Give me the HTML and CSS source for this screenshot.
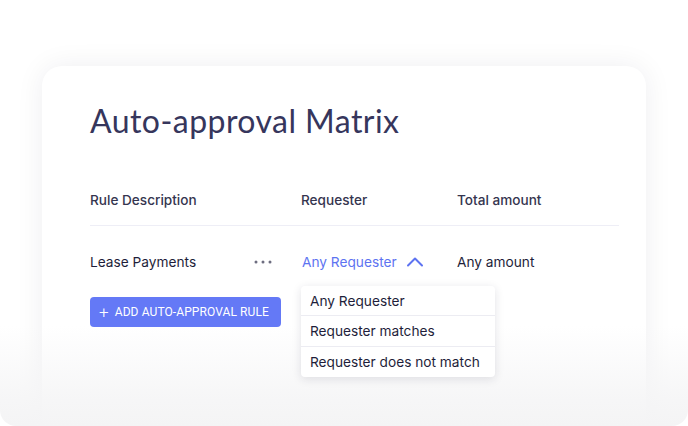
FILE: index.html
```html
<!DOCTYPE html>
<html lang="en">
<head>
<meta charset="utf-8">
<link rel="stylesheet" href="styles.css">
</head>
<body>
<div class="frame">
  <section class="card">
    <h1 class="title">Auto-approval Matrix</h1>
    <div class="row head">
      <div class="c1">Rule Description</div>
      <div class="c2">Requester</div>
      <div class="c3">Total amount</div>
    </div>
    <div class="row body-row">
      <div class="c1 rule">
        <span>Lease Payments</span>
        <svg class="dots" width="18" height="4" viewBox="0 0 18 4"><circle cx="2" cy="2" r="1.5"/><circle cx="9" cy="2" r="1.5"/><circle cx="16" cy="2" r="1.5"/></svg>
      </div>
      <div class="c2 req">
        <span>Any Requester</span>
        <svg class="chev" width="18" height="11" viewBox="0 0 18 11"><path d="M2 9.5 L9 2.5 L16 9.5" fill="none" stroke="currentColor" stroke-width="2" stroke-linecap="round" stroke-linejoin="round"/></svg>
        <ul class="menu">
          <li>Any Requester</li>
          <li>Requester matches</li>
          <li>Requester does not match</li>
        </ul>
      </div>
      <div class="c3">Any amount</div>
    </div>
    <button class="add"><span class="plus">+</span>ADD AUTO-APPROVAL RULE</button>
  </section>
  <div class="fade"></div>
</div>
</body>
</html>
```

FILE: styles.css
```css
* { box-sizing: border-box; }
html, body { margin: 0; padding: 0; background: #fff; }
body { font-family: Inter, "Noto Sans", sans-serif; color: #1f1f3a; }
.frame {
  position: relative;
  width: 688px;
  height: 426px;
  overflow: hidden;
  border-radius: 0 0 16px 16px;
  padding: 66px 42px 0;
}
.card {
  width: 604px;
  height: 400px;
  background: #fff;
  border-radius: 20px;
  box-shadow: 0 0 28px rgba(30, 30, 60, 0.07);
  padding: 36px 27px 0 48px;
}
.title {
  margin: 0;
  font-family: Lato, "Open Sans", sans-serif;
  font-weight: 400;
  font-size: 32px;
  line-height: 38px;
  letter-spacing: 0.45px;
  color: #36365c;
}
.row { display: flex; font-size: 13.7px; }
.c1 { width: 211px; }
.c2 { width: 155px; }
.c3 { flex: 1; }
.head {
  margin-top: 51px;
  height: 35px;
  line-height: 18px;
  color: #35354f;
  font-weight: 500;
  font-size: 13.6px;
  border-bottom: 1px solid #eeeef6;
}
.body-row {
  height: 71px;
  align-items: center;
  line-height: 18px;
  color: #1e1e3a;
}
.rule { display: flex; align-items: center; justify-content: space-between; padding-right: 29px; }
.dots { fill: #6d6d80; }
.req { position: relative; display: flex; align-items: center; color: #5d73f1; padding-left: 1px; }
.chev { margin-left: 9px; color: #5d73f1; }
.c3 { padding-left: 1px; }
.menu {
  position: absolute;
  left: 0;
  top: 33px;
  width: 194px;
  margin: 0;
  padding: 0;
  list-style: none;
  background: #fff;
  border-radius: 4px;
  box-shadow: 0 2px 10px rgba(30, 30, 60, 0.13);
  color: #1e1e3a;
  z-index: 5;
}
.menu li {
  height: 30.6px;
  line-height: 30px;
  padding-left: 9px;
  font-size: 13.7px;
  border-bottom: 1.5px solid #ececf2;
}
.menu li:last-child { border-bottom: 0; }
.add {
  display: flex;
  align-items: center;
  margin-top: 0;
  width: 191px;
  height: 30px;
  border: 0;
  border-radius: 4px;
  background: #6479f6;
  color: #fff;
  font-family: Roboto, "Liberation Sans", sans-serif;
  font-size: 12px;
  letter-spacing: 0.1px;
  padding: 0 0 0 9px;
}
.plus { font-size: 17px; font-weight: 300; margin-right: 6px; line-height: 1; }
.fade {
  position: absolute;
  left: 0; right: 0; bottom: 0;
  height: 100px;
  background: linear-gradient(rgba(245,245,246,0), rgba(245,245,246,0.85) 70%, rgba(244,244,245,1));
  pointer-events: none;
  z-index: 3;
}
```
